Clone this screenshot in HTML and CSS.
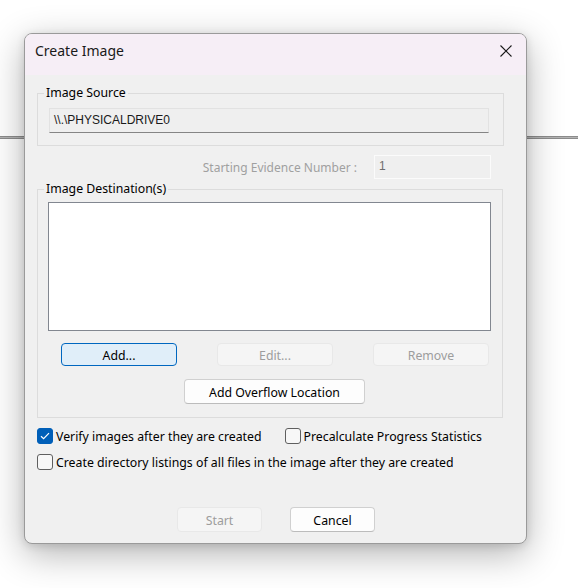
FILE: index.html
```html
<!DOCTYPE html>
<html>
<head>
<meta charset="utf-8">
<title>Create Image</title>
<link rel="stylesheet" href="styles.css">
</head>
<body>
<div class="dialog">
  <div class="titlebar">
    <span class="title">Create Image</span>
    <svg class="close" width="12" height="12" viewBox="0 0 12 12"><path d="M0.5 0.5 L11.5 11.5 M11.5 0.5 L0.5 11.5" stroke="#1a1a1a" stroke-width="1.1" fill="none"/></svg>
  </div>
  <div class="content">
    <fieldset class="group source">
      <legend>Image Source</legend>
      <div class="srcfield">\\.\PHYSICALDRIVE0</div>
    </fieldset>
    <div class="evrow">
      <span class="evlabel">Starting Evidence Number :</span>
      <div class="evfield">1</div>
    </div>
    <fieldset class="group dest">
      <legend>Image Destination(s)</legend>
      <div class="listbox"></div>
      <div class="btnrow">
        <button class="btn btn-default">Add...</button>
        <button class="btn btn-disabled">Edit...</button>
        <button class="btn btn-disabled">Remove</button>
      </div>
      <button class="btn btn-normal overflow">Add Overflow Location</button>
    </fieldset>
    <div class="checkrow first">
      <label class="check"><span class="box checked"><svg width="10" height="8" viewBox="0 0 10 8"><path d="M1 4.2 L3.6 6.6 L9 1.2" stroke="#fff" stroke-width="1.2" fill="none"/></svg></span>Verify images after they are created</label>
      <label class="check second"><span class="box"></span>Precalculate Progress Statistics</label>
    </div>
    <div class="checkrow">
      <label class="check"><span class="box"></span>Create directory listings of all files in the image after they are created</label>
    </div>
    <div class="footer">
      <button class="btn btn-disabled foot">Start</button>
      <button class="btn btn-normal foot">Cancel</button>
    </div>
  </div>
</div>
</body>
</html>
```

FILE: styles.css
```css
html, body {
  margin: 0;
  padding: 0;
}
body {
  width: 578px;
  height: 588px;
  overflow: hidden;
  background-color: #ffffff;
  background-image: linear-gradient(to bottom,
    transparent 0, transparent 136px,
    #8c8c8c 136px, #8c8c8c 137px,
    #b4b4b4 137px, #b4b4b4 138px,
    #8c8c8c 138px, #8c8c8c 139px,
    transparent 139px);
  font-family: "Noto Sans", "Open Sans", sans-serif;
  font-size: 12.3px;
  color: #000;
  padding: 33px 0 0 24px;
  box-sizing: border-box;
}
.dialog {
  width: 503px;
  height: 511px;
  box-sizing: border-box;
  border: 1px solid #9a9a9a;
  border-radius: 8px;
  background: #f0f0f0;
  overflow: hidden;
  box-shadow: 0 10px 36px rgba(0,0,0,0.30), 0 2px 8px rgba(0,0,0,0.12);
}
.titlebar {
  height: 41px;
  background: #f6eef6;
  display: flex;
  align-items: flex-start;
  justify-content: space-between;
  padding: 7px 14px 0 10px;
  box-sizing: border-box;
}
.title {
  font-size: 14px;
  line-height: 20px;
  color: #1a1a1a;
}
.close {
  margin-top: 4px;
}
.content {
  padding: 10px 0 0 12px;
}
.group {
  margin: 0;
  width: 466px;
  box-sizing: border-box;
  border: 1px solid #dcdcdc;
  border-radius: 0;
}
.group legend {
  padding: 0 2px;
  line-height: 16px;
  font-size: 12.3px;
}
.source legend {
  margin-left: -5px;
}
.dest legend {
  margin-left: -4px;
}
.source {
  padding: 7px 14px 12px 11px;
}
.srcfield {
  width: 440px;
  height: 25px;
  box-sizing: border-box;
  background: #efefef;
  border: 1px solid #e2e2e2;
  border-bottom: 1px solid #858585;
  font-family: "Liberation Sans", Arial, sans-serif;
  font-size: 12px;
  line-height: 23px;
  padding-left: 4px;
  color: #1a1a1a;
}
.evrow {
  display: flex;
  justify-content: flex-end;
  align-items: center;
  width: 454px;
  margin-top: 9px;
  height: 24px;
}
.evlabel {
  color: #a0a0a0;
  margin-right: 17px;
  font-size: 12px;
  padding-top: 1px;
}
.evfield {
  width: 117px;
  height: 24px;
  box-sizing: border-box;
  border: 1px solid #fbfbfb;
  background: #efefef;
  font-family: "Liberation Sans", Arial, sans-serif;
  font-size: 12px;
  line-height: 20px;
  padding-left: 4px;
  color: #6d6d6d;
}
.dest {
  margin-top: 2px;
  padding: 5px 11px 13px 10px;
  height: 237px;
}
.listbox {
  width: 443px;
  height: 129px;
  box-sizing: border-box;
  background: #fff;
  border: 1px solid #828790;
}
.btnrow {
  display: flex;
  gap: 40px;
  margin-top: 12px;
  padding-left: 13px;
}
.btn {
  font-family: inherit;
  font-size: 12.3px;
  box-sizing: border-box;
  border-radius: 4px;
  padding: 1px 0 0 0;
  margin: 0;
  color: #000;
}
.btnrow .btn {
  width: 116px;
  height: 23px;
}
.btn-default {
  background: #e0eef9;
  border: 1px solid #0067c0;
}
.btn-disabled {
  background: #f5f5f5;
  border: 1px solid #e8e8e8;
  color: #9d9d9d;
}
.btn-normal {
  background: #fdfdfd;
  border: 1px solid #d0d0d0;
  border-bottom-color: #bcbcbc;
}
.overflow {
  display: block;
  width: 181px;
  height: 25px;
  margin: 13px 0 0 136px;
}
.checkrow {
  display: flex;
  margin-top: 10px;
  height: 16px;
  align-items: center;
}
.check {
  display: flex;
  align-items: center;
  white-space: nowrap;
  line-height: 17px;
}
.check.second {
  margin-left: 23px;
}
.box {
  width: 16px;
  height: 16px;
  box-sizing: border-box;
  border: 1px solid #5f5f5f;
  border-radius: 3px;
  background: #f7f7f7;
  margin-right: 3px;
  display: flex;
  align-items: center;
  justify-content: center;
}
.box.checked {
  background: #005fb8;
  border-color: #005fb8;
}
.footer {
  display: flex;
  gap: 28px;
  margin-top: 37px;
  padding-left: 140px;
}
.foot {
  width: 85px;
  height: 25px;
}
```
